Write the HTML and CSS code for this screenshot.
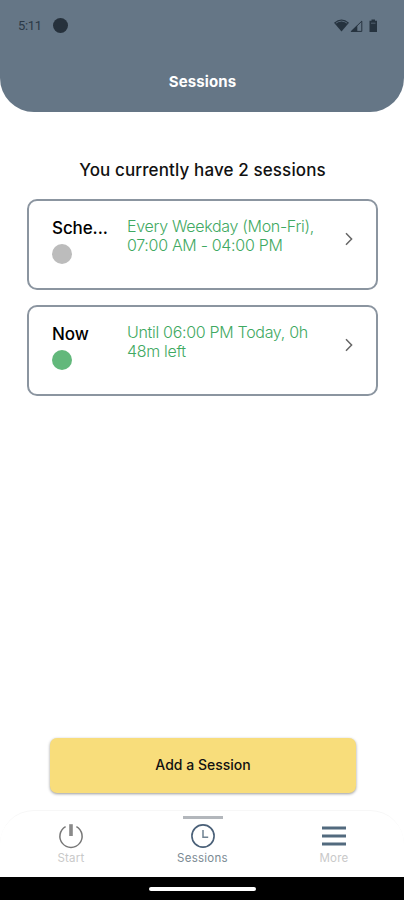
FILE: index.html
```html
<!DOCTYPE html>
<html lang="en">
<head>
<meta charset="utf-8">
<title>Sessions</title>
<link rel="stylesheet" href="styles.css">
</head>
<body>
<div class="app">
  <header class="header">
    <div class="status">
      <span class="time">5:11</span>
      <span class="status-dot"></span>
      <svg class="status-icons" width="44" height="14" viewBox="0 0 44 14">
        <path d="M0 3.7Q7.5 -2.5 15 3.7L7.5 12.5Z" fill="#26333f"/>
        <path d="M1.8 4.2Q7.5 0 13.2 4.2" fill="none" stroke="#657686" stroke-width=".8"/>
        <path d="M17.3 12.4L27.8 2.1V12.4Z" fill="none" stroke="#26333f" stroke-width="1"/>
        <path d="M16.5 12.8L23.3 6.2V12.8Z" fill="#26333f"/>
        <path d="M35.5 1.8H37.5V.6H41V1.8H43V13H35.5Z" fill="#26333f"/>
        <path d="M37 4.2H41.5" stroke="#657686" stroke-width=".7"/>
      </svg>
    </div>
    <h1 class="title">Sessions</h1>
  </header>
  <main class="main">
    <h2 class="summary">You currently have 2 sessions</h2>
    <section class="card">
      <div class="card-name"><div class="name">Sche...</div><div class="dot"></div></div>
      <p class="detail">Every Weekday (Mon-Fri),<br>07:00 AM - 04:00 PM</p>
      <svg class="chevron" width="10" height="14" viewBox="0 0 10 14"><path d="M2 1.2L7.6 7L2 12.8"/></svg>
    </section>
    <section class="card">
      <div class="card-name"><div class="name">Now</div><div class="dot active"></div></div>
      <p class="detail">Until 06:00 PM Today, 0h<br>48m left</p>
      <svg class="chevron" width="10" height="14" viewBox="0 0 10 14"><path d="M2 1.2L7.6 7L2 12.8"/></svg>
    </section>
    <button class="add"><span>Add a Session</span></button>
  </main>
  <nav class="tabs">
    <a class="tab">
      <svg width="26" height="26" viewBox="0 0 26 26"><path d="M7.6 3.6A11.1 11.1 0 1 0 18.4 3.6" fill="none" stroke="#777" stroke-width="1.5"/><path d="M13 1.2V13" stroke="#8a8a8a" stroke-width="3.6"/></svg>
      <span class="label start">Start</span>
    </a>
    <a class="tab selected">
      <svg width="26" height="26" viewBox="0 0 26 26" fill="none" stroke="#4a6078"><circle cx="13" cy="13" r="11.1" stroke-width="1.6"/><path d="M13 7V14.2H18.2" stroke-width="1.5" stroke="#6f8292"/></svg>
      <span class="label">Sessions</span>
    </a>
    <a class="tab">
      <svg width="26" height="26" viewBox="0 0 26 26"><path d="M1 5H25M1 13H25M1 21H25" stroke="#526a7e" stroke-width="2.8"/></svg>
      <span class="label more">More</span>
    </a>
  </nav>
  <footer class="gesture"><div class="handle"></div></footer>
</div>
</body>
</html>
```
FILE: styles.css
```css
* { box-sizing: border-box; }
body { margin: 0; background: #fff; font-family: Inter, "Liberation Sans", sans-serif; color: #111; }
.app { width: 404px; height: 900px; display: flex; flex-direction: column; overflow: hidden; }
.header { height: 112px; flex: none; background: #657686; border-radius: 0 0 34px 34px; }
.status { height: 51px; display: flex; align-items: center; padding: 0 26px 0 18px; color: #2b3946; }
.time { width: 35px; font: 400 13px/16px Roboto, sans-serif; letter-spacing: -.3px; white-space: nowrap; }
.status-dot { width: 15px; height: 15px; border-radius: 50%; background: #26313c; }
.status-icons { margin-left: auto; }
.title { margin: 21px 0 0; text-align: center; font-size: 15px; line-height: 20px; font-weight: 700; color: #fff; padding-left: 1px; letter-spacing: .1px; }
.main { height: 698px; flex: none; display: flex; flex-direction: column; padding: 0 26px 17px 27px; }
.summary { margin: 46px 0 17px; text-align: center; font-size: 17px; line-height: 24px; font-weight: 500; letter-spacing: .12px; white-space: nowrap; }
.card { height: 91px; flex: none; display: flex; border: 2px solid #8b95a0; border-radius: 10px; margin-bottom: 15px; padding: 16px 22px 0 23px; }
.card-name { width: 75px; flex: none; }
.name { margin-top: -1px; font-size: 17px; line-height: 24px; font-weight: 500; color: #000; white-space: nowrap; letter-spacing: -.1px; }
.dot { width: 20px; height: 20px; margin-top: 4px; border-radius: 50%; background: #bcbcbc; }
.active { background: #62b87b; }
.detail { margin: 0; font-size: 16px; line-height: 19px; font-weight: 300; letter-spacing: -.31px; color: #3fa962; white-space: nowrap; }
.chevron { margin: 15px 0 0 auto; fill: none; stroke: #666; stroke-width: 1.5; }
.add { width: 306px; height: 55px; margin: auto 0 0 23px; border: 0; border-radius: 7px; background: #f8dd7b; box-shadow: 0 1px 3px #0006; font: 500 14px/20px Inter, sans-serif; color: #111; padding: 0 0 1px; }
.tabs { height: 67px; flex: none; display: flex; justify-content: space-between; padding: 0 36px 0 37px; border-top: 1px solid #f7f7f7; border-radius: 34px 34px 0 0; }
.tab { width: 68px; display: flex; flex-direction: column; align-items: center; padding-top: 12px; position: relative; color: #c9c9c9; }
.tab svg { flex: none; }
.label { font: 400 11.5px/14px Inter, sans-serif; margin-top: 2px; letter-spacing: .25px; }
.selected { color: #7b8a93; }
.selected::before { content: ""; position: absolute; top: 5px; left: 14px; width: 40px; height: 3px; background: #b3b7bc; }
.gesture { height: 23px; flex: none; background: #000; display: flex; justify-content: center; align-items: center; }
.handle { width: 107px; height: 4px; border-radius: 2px; background: #fff; }
```
